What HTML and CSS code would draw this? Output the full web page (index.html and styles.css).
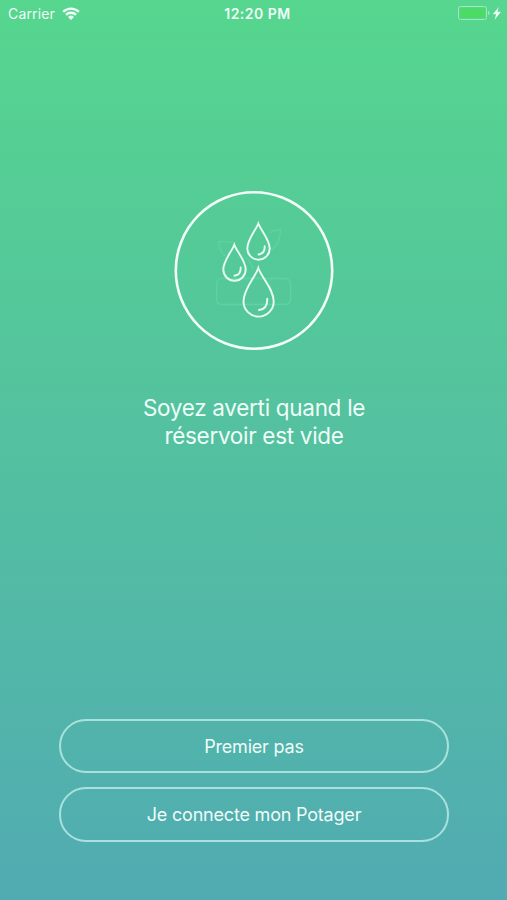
FILE: index.html
```html
<!DOCTYPE html>
<html lang="fr">
  <head>
    <meta charset="utf-8" />
    <meta name="viewport" content="width=device-width, initial-scale=1.0" />
    <title>Potager</title>
    <link rel="stylesheet" href="styles.css" />
  </head>

  <body>
    <header class="status">
      <div class="carrier">
        <span>Carrier</span>
        <svg class="wifi" width="18" height="14" viewBox="0 0 18 14">
          <path d="M1.2 4.900a11 11 0 0 1 15.600 0M4 7.800a7 7 0 0 1 10 0" />
          <path class="dot" d="M6 10a4.300 4.300 0 0 1 6 0l-3 3z" />
        </svg>
      </div>
      <div class="time">12:20 PM</div>
      <div class="power">
        <svg width="44" height="16" viewBox="0 0 44 16">
          <rect class="shell" x="0.5" y="0.5" width="28" height="13" rx="2" />
          <rect class="charge" x="2.3" y="2.3" width="24.500" height="9.400" rx="0.8" />
          <path class="cap" d="M30 4.800q1.600.6 1.600 2.200t-1.600 2.200z" />
          <path class="bolt" d="M40.800 1 34.800 8.200h3.400l-1.600 5.600 6.400-8h-3.700z" />
        </svg>
      </div>
    </header>

    <main>
      <svg class="picto" width="180" height="180" viewBox="-1 0 180 180">
        <!-- plant pot behind the drops -->
        <g class="pot">
          <rect x="51.500" y="98.500" width="74" height="26" rx="5" />
          <path d="M68 62.500q-7-1.500-14.500-.5q1 10 7 14M104.500 52.500q5-3 11-3q-.5 16-10.500 20.500M80 77q6 4 8 12" />
        </g>
        <circle cx="89" cy="90.500" r="78.200" />
        <g class="drops">
          <path d="M93.300 43.500C91 50 82.300 59.500 82.300 68.500a11.200 11.200 0 0 0 22.400 0C104.700 59.500 95.600 50 93.300 43.500z" />
          <path d="M99.700 66.300q.4 7.500-6.200 8.200" />
          <path d="M69.300 64.700C67 71.200 58.300 80.600 58.300 89.600a11.200 11.200 0 0 0 22.400 0C80.700 80.600 71.600 71.200 69.300 64.700z" />
          <path d="M75.700 87.500q.4 7.500-6.200 8.200" />
          <path d="M93.300 88C90.500 97 78.500 108.500 78.500 121.500a15.100 15.100 0 0 0 30.200 0C108.700 108.500 96.100 97 93.300 88z" />
          <path d="M102.300 118.700q.2 10.500-8.300 11.300" />
        </g>
      </svg>
      <h1>Soyez averti quand le<br />réservoir est vide</h1>
    </main>

    <nav>
      <button>Premier pas</button>
      <button>Je connecte mon Potager</button>
    </nav>
  </body>
</html>
```

FILE: styles.css
```css
* {
  box-sizing: border-box;
}

body {
  margin: 0;
  height: 900px;
  display: flex;
  flex-direction: column;
  font-family: Inter, "Liberation Sans", sans-serif;
  color: #effcf8;
  background: linear-gradient(#56d68e, #51abb2);
}

svg {
  display: block;
  fill: none;
}

.status {
  height: 27px;
  padding: 0 5px 0 8px;
  display: grid;
  grid-template-columns: 1fr auto 1fr;
  align-items: center;
  font-size: 14px;
}

.carrier {
  display: flex;
  align-items: center;
  gap: 7px;
  letter-spacing: 0.15px;
}

.wifi {
  stroke: #effcf8;
  stroke-width: 2.4;
}

.wifi .dot {
  fill: #effcf8;
  stroke: none;
}

.time {
  padding-left: 5px;
  font-weight: 600;
  letter-spacing: 0.5px;
}

.power {
  display: flex;
  justify-content: flex-end;
}

.shell {
  stroke: #a0e9bb;
}

.charge {
  fill: #4cdb64;
}

.cap {
  fill: #a0e9bb;
}

.bolt {
  fill: #effcf8;
}

main {
  flex: 1;
  padding: 153px 0 0 1px;
}

.picto {
  margin: 0 auto;
}

.picto circle {
  stroke: #f3fdf8;
  stroke-width: 2.6;
}

.drops {
  stroke: #e9fbf3;
  stroke-width: 1.9;
  stroke-linecap: round;
}

.pot {
  stroke: #5dd3a3;
  stroke-width: 1.3;
}

h1 {
  margin: 34px 0 0;
  font-size: 22.5px;
  font-weight: 400;
  line-height: 28px;
  letter-spacing: -0.3px;
  text-align: center;
}

nav {
  display: flex;
  flex-direction: column;
  gap: 14px;
  padding: 0 58px 58.5px 59px;
}

button {
  height: 54.3px;
  padding: 0;
  border: 2px solid #a9e2dc;
  border-radius: 27px;
  background: none;
  color: #effcf8;
  font-family: inherit;
  font-size: 18px;
  letter-spacing: -0.2px;
}
```
